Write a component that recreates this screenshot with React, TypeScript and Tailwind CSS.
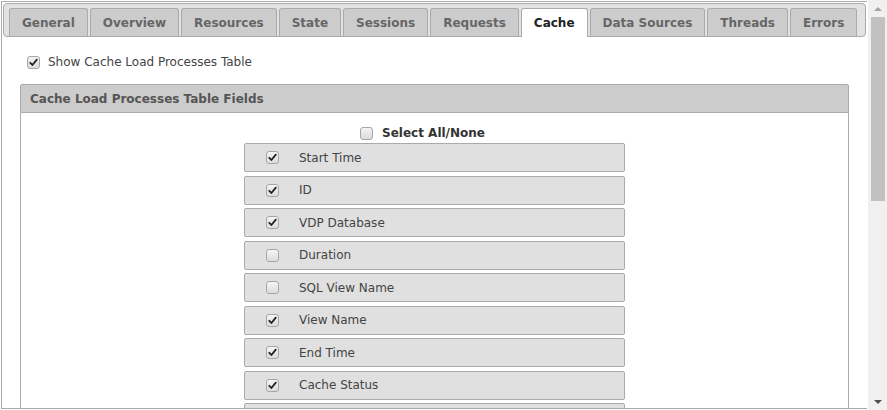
import React from 'react'

const tabs = ['General', 'Overview', 'Resources', 'State', 'Sessions', 'Requests', 'Cache', 'Data Sources', 'Threads', 'Errors']

const fields: { name: string; on: boolean }[] = [
  { name: 'Start Time', on: true },
  { name: 'ID', on: true },
  { name: 'VDP Database', on: true },
  { name: 'Duration', on: false },
  { name: 'SQL View Name', on: false },
  { name: 'View Name', on: true },
  { name: 'End Time', on: true },
  { name: 'Cache Status', on: true },
]

function Check({ on }: { on: boolean }) {
  return (
    <span className="flex h-[13px] w-[13px] shrink-0 items-center justify-center rounded-[3px] border border-[#a6a6a6] bg-gradient-to-b from-[#f4f4f4] to-[#dcdcdc]">
      {on && (
        <svg width="9" height="9" viewBox="0 0 9 9">
          <path d="M1.3 4.8 L3.4 7 L7.8 1.6" fill="none" stroke="#222" strokeWidth="1.8" strokeLinecap="round" strokeLinejoin="round" />
        </svg>
      )}
    </span>
  )
}

export default function App() {
  return (
    <div className="flex h-[410px] w-[887px] overflow-hidden bg-white font-['DejaVu_Sans',sans-serif] text-[12px]">
      {/* main frame */}
      <div className="ml-[1px] mt-[1px] flex h-[408px] w-[866px] flex-col overflow-hidden border-b border-l border-t border-[#aaaaaa]">
        {/* tab strip */}
        <div className="mx-[1px] mt-[1px] flex h-[34px] shrink-0 items-end gap-[2px] rounded-[4px] border border-[#aaaaaa] bg-[#e2e2e2] pl-[5px]">
          {tabs.map((t) =>
            t === 'Cache' ? (
              <div
                key={t}
                className="relative -mb-px flex h-[29px] items-center rounded-t-[3px] border border-b-0 border-[#aaaaaa] bg-white px-[12px] font-bold text-[#222222]"
              >
                {t}
              </div>
            ) : (
              <div
                key={t}
                className="flex h-[28px] items-center rounded-t-[3px] border border-b-0 border-[#aaaaaa] bg-[#cccccc] px-[12px] font-bold text-[#666666]"
              >
                {t}
              </div>
            ),
          )}
        </div>

        {/* show table option */}
        <div className="flex shrink-0 items-center gap-[8px] pl-[25px] pt-[16px] text-[#444444]">
          <Check on />
          <span>Show Cache Load Processes Table</span>
        </div>

        {/* fields panel */}
        <div className="mx-[18px] mt-[13px] flex shrink-0 flex-col">
          <div className="flex h-[29px] items-center rounded-t-[2px] border border-[#aaaaaa] bg-[#cccccc] pl-[9px] font-bold text-[#555555]">
            Cache Load Processes Table Fields
          </div>
          <div className="flex flex-col items-center border-x border-[#aaaaaa] bg-white pt-[11px]">
            <div className="mr-[24px] flex items-center gap-[9px] font-bold text-[#333333]">
              <Check on={false} />
              <span>Select All/None</span>
            </div>
            <div className="mt-[1px] flex flex-col gap-[3.5px]">
              {fields.map((f) => (
                <div
                  key={f.name}
                  className="flex h-[29px] w-[381px] items-center rounded-[2px] border border-[#aaaaaa] bg-[#e0e0e0] pl-[21px] text-[#444444]"
                >
                  <Check on={f.on} />
                  <span className="ml-[20px]">{f.name}</span>
                </div>
              ))}
              {/* next row, cut off by the viewport */}
              <div className="h-[29px] w-[381px] rounded-[2px] border border-[#aaaaaa] bg-[#e0e0e0]" />
            </div>
          </div>
        </div>
      </div>

      {/* scrollbar */}
      <div className="ml-[1px] flex h-[410px] w-[19px] flex-col items-center bg-[#f0f0f0]">
        <div className="flex h-[17px] items-center justify-center">
          <span className="h-0 w-0 border-x-[4px] border-b-[4px] border-x-transparent border-b-[#a3a3a3]" />
        </div>
        <div className="h-[184px] w-[14px] bg-[#c1c1c1]" />
        <div className="flex-1" />
        <div className="flex h-[17px] items-center justify-center">
          <span className="h-0 w-0 border-x-[4px] border-t-[4px] border-x-transparent border-t-[#505050]" />
        </div>
      </div>
    </div>
  )
}
